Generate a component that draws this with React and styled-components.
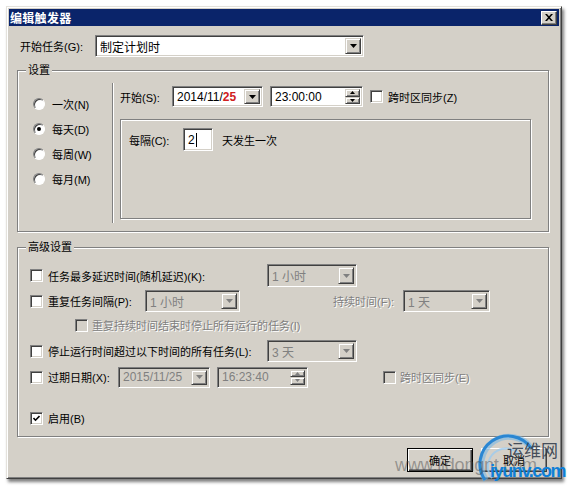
import React from 'react';
import styled, { createGlobalStyle } from 'styled-components';

// classic windows palette
const face = '#d4d0c8';
const shadow = '#808080';
const dark = '#404040';

const GlobalStyle = createGlobalStyle`
  html, body { margin: 0; padding: 0; background: #fff; }
  body {
    font-family: "Liberation Sans", "Noto Sans CJK SC", sans-serif;
    font-size: 11px;
    color: #000;
  }
`;

const Page = styled.div`
  position: relative;
  width: 573px;
  height: 491px;
  padding: 6px 0 0 6px;
  box-sizing: border-box;
  background: #fff;
  overflow: hidden;
`;

const Window = styled.div`
  width: 556px;
  height: 473px;
  box-sizing: border-box;
  background: ${face};
  border: 1px solid;
  border-color: #e4e2dc ${dark} ${dark} #e4e2dc;
  box-shadow: inset 1px 1px 0 #fff, inset -1px -1px 0 ${shadow}, 2px 3px 3px rgba(0,0,0,0.5);
  padding: 2px;
  display: flex;
  flex-direction: column;
`;

const TitleBar = styled.div`
  height: 17px;
  background: #0a246a;
  display: flex;
  align-items: center;
  justify-content: space-between;
  padding: 0 2px 0 1px;
`;

const Title = styled.span`
  color: #fff;
  font-weight: bold;
  font-size: 12px;
  letter-spacing: 0.3px;
`;

const CloseBtn = styled.div`
  width: 14px;
  height: 12px;
  background: ${face};
  border: 1px solid;
  border-color: #fff ${dark} ${dark} #fff;
  box-shadow: inset -1px -1px 0 ${shadow};
  display: flex;
  align-items: center;
  justify-content: center;
`;

const Body = styled.div`
  padding: 9px 10px 0 8px;
  display: flex;
  flex-direction: column;
`;

const TaskRow = styled.div`
  display: flex;
  align-items: center;
  height: 22px;
  margin-left: 3px;
`;

const Label = styled.span`
  white-space: nowrap;
  width: ${p => (p.$w ? `${p.$w}px` : 'auto')};
  flex-shrink: 0;
  margin-left: ${p => p.$ml || 0}px;
  color: ${p => (p.$disabled ? shadow : '#000')};
  text-shadow: ${p => (p.$disabled ? '1px 1px 0 #fff' : 'none')};
`;

const Field = styled.div`
  width: ${p => p.$w}px;
  height: ${p => p.$h || 22}px;
  box-sizing: border-box;
  flex-shrink: 0;
  margin-right: ${p => p.$mr || 0}px;
  background: ${p => (p.$disabled ? face : '#fff')};
  border: 1px solid;
  border-color: ${shadow} #fff #fff ${shadow};
  box-shadow: inset 1px 1px 0 ${dark}, inset -1px -1px 0 ${face};
  padding: 2px;
  display: flex;
  align-items: stretch;
`;

const FieldText = styled.span`
  flex: 1;
  display: flex;
  align-items: center;
  padding-left: 2px;
  white-space: nowrap;
  font-size: 12px;
  color: ${p => (p.$disabled ? shadow : '#000')};
`;

const Red = styled.span`
  color: #d02020;
  font-weight: bold;
`;

const Caret = styled.span`
  display: inline-block;
  width: 1px;
  height: 14px;
  background: #000;
  margin-left: 1px;
`;

const DropBtn = styled.div`
  width: 16px;
  box-sizing: border-box;
  background: ${face};
  border: 1px solid;
  border-color: ${face} ${dark} ${dark} ${face};
  box-shadow: inset 1px 1px 0 #fff, inset -1px -1px 0 ${shadow};
  display: flex;
  align-items: center;
  justify-content: center;
`;

const SpinCol = styled.div`
  width: 15px;
  display: flex;
  flex-direction: column;
`;

const SpinBtn = styled(DropBtn)`
  width: 15px;
  flex: 1;
`;

const Arrow = ({ up, disabled }) => (
  <svg width="7" height="4" viewBox="0 0 7 4">
    <path d={up ? 'M0 4 L3.5 0 L7 4 Z' : 'M0 0 L7 0 L3.5 4 Z'} fill={disabled ? shadow : '#000'} />
  </svg>
);

const SmallArrow = ({ up, disabled }) => (
  <svg width="5" height="3" viewBox="0 0 5 3">
    <path d={up ? 'M0 3 L2.5 0 L5 3 Z' : 'M0 0 L5 0 L2.5 3 Z'} fill={disabled ? shadow : '#000'} />
  </svg>
);

const Combo = ({ w, h, value, disabled, mr }) => (
  <Field $w={w} $h={h} $disabled={disabled} $mr={mr}>
    <FieldText $disabled={disabled}>{value}</FieldText>
    <DropBtn><Arrow disabled={disabled} /></DropBtn>
  </Field>
);

const Spin = ({ w, h, value, disabled, mr }) => (
  <Field $w={w} $h={h} $disabled={disabled} $mr={mr}>
    <FieldText $disabled={disabled}>{value}</FieldText>
    <SpinCol>
      <SpinBtn><SmallArrow up disabled={disabled} /></SpinBtn>
      <SpinBtn><SmallArrow disabled={disabled} /></SpinBtn>
    </SpinCol>
  </Field>
);

const Box = styled.span`
  width: 13px;
  height: 13px;
  box-sizing: border-box;
  flex-shrink: 0;
  margin-left: ${p => p.$ml || 0}px;
  margin-right: ${p => (p.$gap !== undefined ? p.$gap : 5)}px;
  background: ${p => (p.$disabled ? face : '#fff')};
  border: 1px solid;
  border-color: ${shadow} #fff #fff ${shadow};
  box-shadow: inset 1px 1px 0 ${dark}, inset -1px -1px 0 ${face};
  display: flex;
  align-items: center;
  justify-content: center;
`;

const Check = ({ checked, disabled, ml, gap }) => (
  <Box $disabled={disabled} $ml={ml} $gap={gap}>
    {checked && (
      <svg width="7" height="7" viewBox="0 0 7 7">
        <path d="M0.5 3 L2.5 5.2 L6.5 1" stroke="#000" strokeWidth="1.6" fill="none" />
      </svg>
    )}
  </Box>
);

const Group = styled.div`
  position: relative;
  box-sizing: border-box;
  width: 532px;
  height: ${p => p.$h}px;
  margin-top: ${p => p.$mt}px;
  border: 1px solid ${shadow};
  box-shadow: inset 1px 1px 0 #fff, 1px 1px 0 #fff;
`;

const Legend = styled.span`
  position: absolute;
  top: -8px;
  left: 8px;
  padding: 0 2px;
  line-height: 14px;
  background: ${face};
`;

const SettingsBody = styled.div`
  display: flex;
  padding-top: 12px;
`;

const RadioCol = styled.div`
  width: 94px;
  padding-top: 8px;
  display: flex;
  flex-direction: column;
`;

const RadioRow = styled.div`
  height: 25px;
  display: flex;
  align-items: center;
  padding-left: 15px;
`;

const Radio = styled.span`
  position: relative;
  width: 12px;
  height: 12px;
  box-sizing: border-box;
  border-radius: 50%;
  margin-right: 7px;
  background: #fff;
  border: 1px solid;
  border-color: ${shadow} #fff #fff ${shadow};
  box-shadow: inset 1px 1px 0 ${dark};

  &::after {
    content: '';
    display: ${p => (p.$checked ? 'block' : 'none')};
    position: absolute;
    left: 3px;
    top: 3px;
    width: 4px;
    height: 4px;
    border-radius: 50%;
    background: #000;
  }
`;

const VSep = styled.div`
  width: 0;
  height: 140px;
  border-left: 1px solid ${shadow};
  border-right: 1px solid #fff;
`;

const RightPanel = styled.div`
  width: 411px;
  margin-left: 6px;
  padding-top: 3px;
  display: flex;
  flex-direction: column;
`;

const Row = styled.div`
  display: flex;
  align-items: center;
  height: ${p => p.$h || 22}px;
  margin-top: ${p => p.$mt || 0}px;
  padding-left: ${p => p.$pl || 0}px;
`;

const InnerBox = styled.div`
  margin-top: 12px;
  height: 100px;
  box-sizing: border-box;
  border: 1px solid ${shadow};
  box-shadow: inset 1px 1px 0 #fff, 1px 1px 0 #fff;
  padding: 8px 0 0 8px;
`;

const Advanced = styled.div`
  padding: 16px 0 0 12px;
  display: flex;
  flex-direction: column;
`;

const Buttons = styled.div`
  display: flex;
  justify-content: flex-end;
  gap: 8px;
  margin-top: 11px;
  padding-right: 2px;
`;

const Button = styled.div`
  width: 66px;
  height: 24px;
  box-sizing: border-box;
  background: ${face};
  border: 1px solid;
  border-color: ${p => (p.$default ? '#000' : `#fff ${dark} ${dark} #fff`)};
  box-shadow: ${p => (p.$default
    ? `inset 1px 1px 0 #fff, inset -1px -1px 0 ${dark}, inset -2px -2px 0 ${shadow}`
    : `inset -1px -1px 0 ${shadow}`)};
  display: flex;
  align-items: center;
  justify-content: center;
`;

const Watermark = styled.div`
  position: absolute;
  left: 0;
  top: 0;
  width: 573px;
  height: 491px;
  pointer-events: none;
`;

const WmSite = styled.span`
  position: absolute;
  left: 395px;
  top: 455px;
  font-family: "Liberation Sans", sans-serif;
  font-size: 18px;
  color: rgba(70, 70, 70, 0.45);
  letter-spacing: -0.2px;
`;

const WmName = styled.span`
  position: absolute;
  left: 507px;
  top: 438px;
  font-family: "Noto Sans CJK SC", sans-serif;
  font-size: 17px;
  line-height: 24px;
  color: rgba(50, 60, 75, 0.9);
`;

const WmDomain = styled.span`
  position: absolute;
  left: 490px;
  top: 460px;
  font-family: "Liberation Sans", sans-serif;
  font-weight: bold;
  font-size: 18px;
  line-height: 22px;
  letter-spacing: -1.4px;
  white-space: nowrap;
  color: #0f7fd6;
`;

const WmArc = () => (
  <svg width="573" height="491" style={{ position: 'absolute', left: 0, top: 0 }}>
    <path d="M486 480 A26 26 0 0 1 532 449" stroke="#6fb4e8" strokeWidth="6" fill="none" opacity="0.55" />
    <path d="M485 480 A26 26 0 0 1 531 448" stroke="#2a86d2" strokeWidth="3" fill="none" />
    <path d="M492 478 A18 18 0 0 1 520 455" stroke="#9ccbef" strokeWidth="2" fill="none" opacity="0.8" />
  </svg>
);

const App = () => (
  <>
    <GlobalStyle />
    <Page>
      <Window>
        <TitleBar>
          <Title>编辑触发器</Title>
          <CloseBtn>
            <svg width="8" height="7" viewBox="0 0 8 7">
              <path d="M0 0 L2 0 L4 2.3 L6 0 L8 0 L5 3.5 L8 7 L6 7 L4 4.7 L2 7 L0 7 L3 3.5 Z" fill="#000" />
            </svg>
          </CloseBtn>
        </TitleBar>
        <Body>
          <TaskRow>
            <Label $w={75}>开始任务(G):</Label>
            <Combo w={269} value="制定计划时" />
          </TaskRow>

          <Group $h={162} $mt={13}>
            <Legend>设置</Legend>
            <SettingsBody>
              <RadioCol>
                <RadioRow><Radio />一次(N)</RadioRow>
                <RadioRow><Radio $checked />每天(D)</RadioRow>
                <RadioRow><Radio />每周(W)</RadioRow>
                <RadioRow><Radio />每月(M)</RadioRow>
              </RadioCol>
              <VSep />
              <RightPanel>
                <Row $h={21}>
                  <Label $w={52}>开始(S):</Label>
                  <Combo w={91} h={21} mr={7} value={<>2014/11/<Red>25</Red></>} />
                  <Spin w={93} h={21} mr={7} value="23:00:00" />
                  <Check />
                  <Label>跨时区同步(Z)</Label>
                </Row>
                <InnerBox>
                  <Row $h={23}>
                    <Label $w={54}>每隔(C):</Label>
                    <Field $w={30} $h={23} $mr={9}>
                      <FieldText>2<Caret /></FieldText>
                    </Field>
                    <Label>天发生一次</Label>
                  </Row>
                </InnerBox>
              </RightPanel>
            </SettingsBody>
          </Group>

          <Group $h={190} $mt={15}>
            <Legend>高级设置</Legend>
            <Advanced>
              <Row $h={23}>
                <Check />
                <Label $w={219}>任务最多延迟时间(随机延迟)(K):</Label>
                <Combo w={90} h={23} disabled value="1 小时" />
              </Row>
              <Row $mt={3}>
                <Check />
                <Label $w={97}>重复任务间隔(P):</Label>
                <Combo w={95} disabled value="1 小时" />
                <Label $w={70} $ml={93} $disabled>持续时间(F):</Label>
                <Combo w={87} disabled value="1 天" />
              </Row>
              <Row $h={26} $pl={45}>
                <Check disabled gap={4} />
                <Label $disabled>重复持续时间结束时停止所有运行的任务(I)</Label>
              </Row>
              <Row $mt={2}>
                <Check />
                <Label $w={219}>停止运行时间超过以下时间的所有任务(L):</Label>
                <Combo w={90} disabled value="3 天" />
              </Row>
              <Row $mt={4}>
                <Check />
                <Label $w={70}>过期日期(X):</Label>
                <Combo w={92} h={21} mr={7} disabled value="2015/11/25" />
                <Spin w={91} h={21} disabled value="16:23:40" />
                <Check disabled ml={75} gap={4} />
                <Label $disabled>跨时区同步(E)</Label>
              </Row>
              <Row $mt={19}>
                <Check checked />
                <Label>启用(B)</Label>
              </Row>
            </Advanced>
          </Group>

          <Buttons>
            <Button $default>确定</Button>
            <Button>取消</Button>
          </Buttons>
        </Body>
      </Window>
      <Watermark>
        <WmArc />
        <WmSite>www.lidongnt.com</WmSite>
        <WmName>运维网</WmName>
        <WmDomain>iyunv.com</WmDomain>
      </Watermark>
    </Page>
  </>
);

export default App;
